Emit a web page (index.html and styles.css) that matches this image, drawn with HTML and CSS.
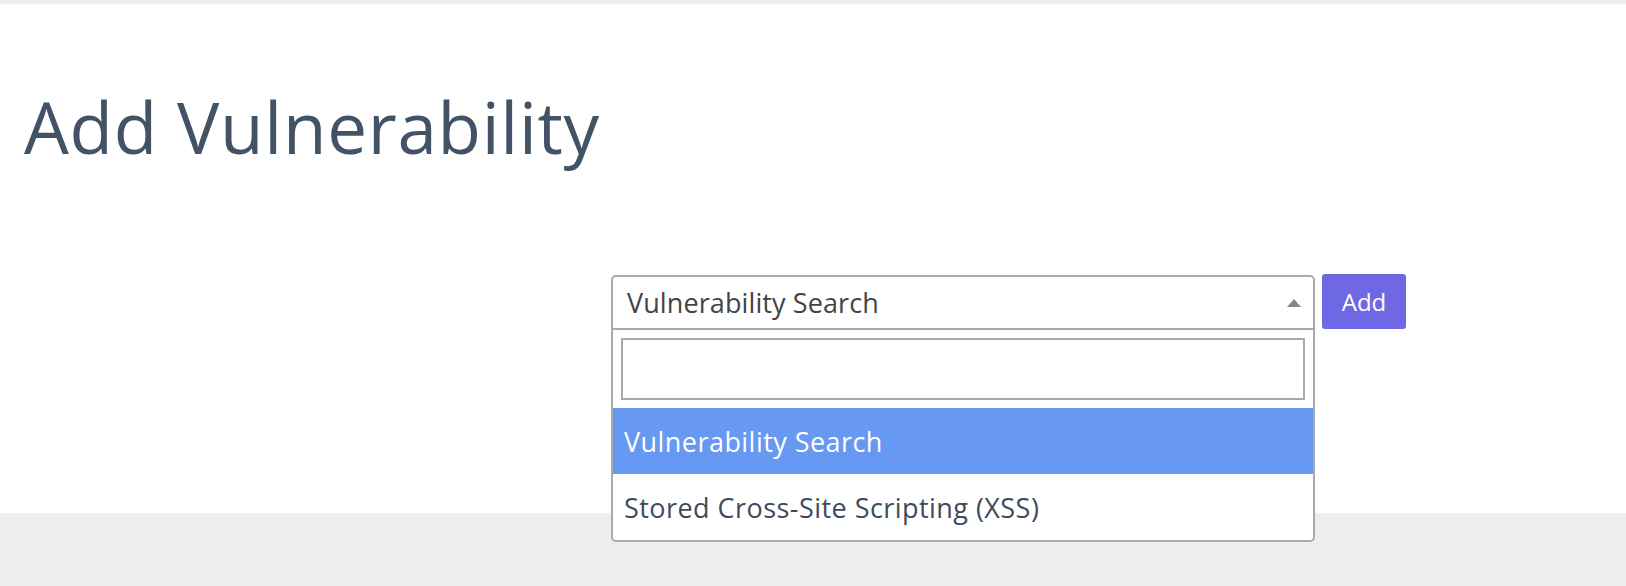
FILE: index.html
```html
<!DOCTYPE html>
<html lang="en">
<head>
<meta charset="utf-8">
<title>Add Vulnerability</title>
<link rel="stylesheet" href="styles.css">
</head>
<body>
<div class="topbar"></div>
<main class="panel">
  <h1 class="title">Add Vulnerability</h1>
  <form class="form-row">
    <div class="select">
      <div class="selection">
        <span class="selection-text">Vulnerability Search</span>
        <span class="arrow"></span>
      </div>
      <div class="dropdown">
        <div class="search"><input class="search-input" type="text"></div>
        <ul class="options">
          <li class="option highlighted">Vulnerability Search</li>
          <li class="option">Stored Cross-Site Scripting (XSS)</li>
        </ul>
      </div>
    </div>
    <button class="btn" type="button">Add</button>
  </form>
</main>
</body>
</html>
```

FILE: styles.css
```css
* { box-sizing: border-box; }
html, body { margin: 0; padding: 0; }
body {
  background: #ededed;
  font-family: "Open Sans", "Lato", sans-serif;
  height: 586px;
  overflow: hidden;
}
.topbar { height: 4px; background: #eeeeee; }
.panel {
  background: #ffffff;
  height: 509px;
  padding: 0 0 0 24px;
  display: flex;
  flex-direction: column;
}
.title {
  margin: 0;
  padding-top: 78px;
  font-size: 71px;
  line-height: 90px;
  font-weight: 400;
  letter-spacing: 0.7px;
  color: #435366;
}
.form-row {
  display: flex;
  align-items: flex-start;
  gap: 7px;
  margin: 103px 0 0 587px;
}
.select { position: relative; width: 704px; }
.selection {
  height: 55px;
  border: 2px solid #aaaaaa;
  border-radius: 5px 5px 0 0;
  display: flex;
  align-items: center;
  padding: 0 12px 0 14px;
  background: #fff;
}
.selection-text {
  flex: 1;
  font-size: 27px;
  letter-spacing: 0.1px;
  color: #444444;
}
.arrow {
  width: 0; height: 0;
  border-left: 7.5px solid transparent;
  border-right: 7.5px solid transparent;
  border-bottom: 8px solid #888888;
}
.dropdown {
  position: absolute;
  left: 0; top: 55px;
  width: 704px;
  background: #fff;
  border: 2px solid #aaaaaa;
  border-top: none;
  border-radius: 0 0 5px 5px;
}
.search { padding: 8px; }
.search-input {
  display: block;
  width: 100%;
  height: 62px;
  border: 2px solid #aaaaaa;
  outline: none;
  margin: 0;
}
.options { list-style: none; margin: 0; padding: 0; }
.option {
  height: 66px;
  display: flex;
  align-items: center;
  padding-left: 11px;
  font-size: 27px;
  letter-spacing: 0.45px;
  color: #3e4b5c;
}
.option.highlighted { background: #6798f2; color: #ffffff; }
.btn {
  margin-top: -1px;
  width: 84px;
  height: 55px;
  border: none;
  border-radius: 3px;
  background: #6f68e4;
  color: #ffffff;
  font-family: "Open Sans", "Lato", sans-serif;
  font-size: 24px;
  padding: 0;
}
```
